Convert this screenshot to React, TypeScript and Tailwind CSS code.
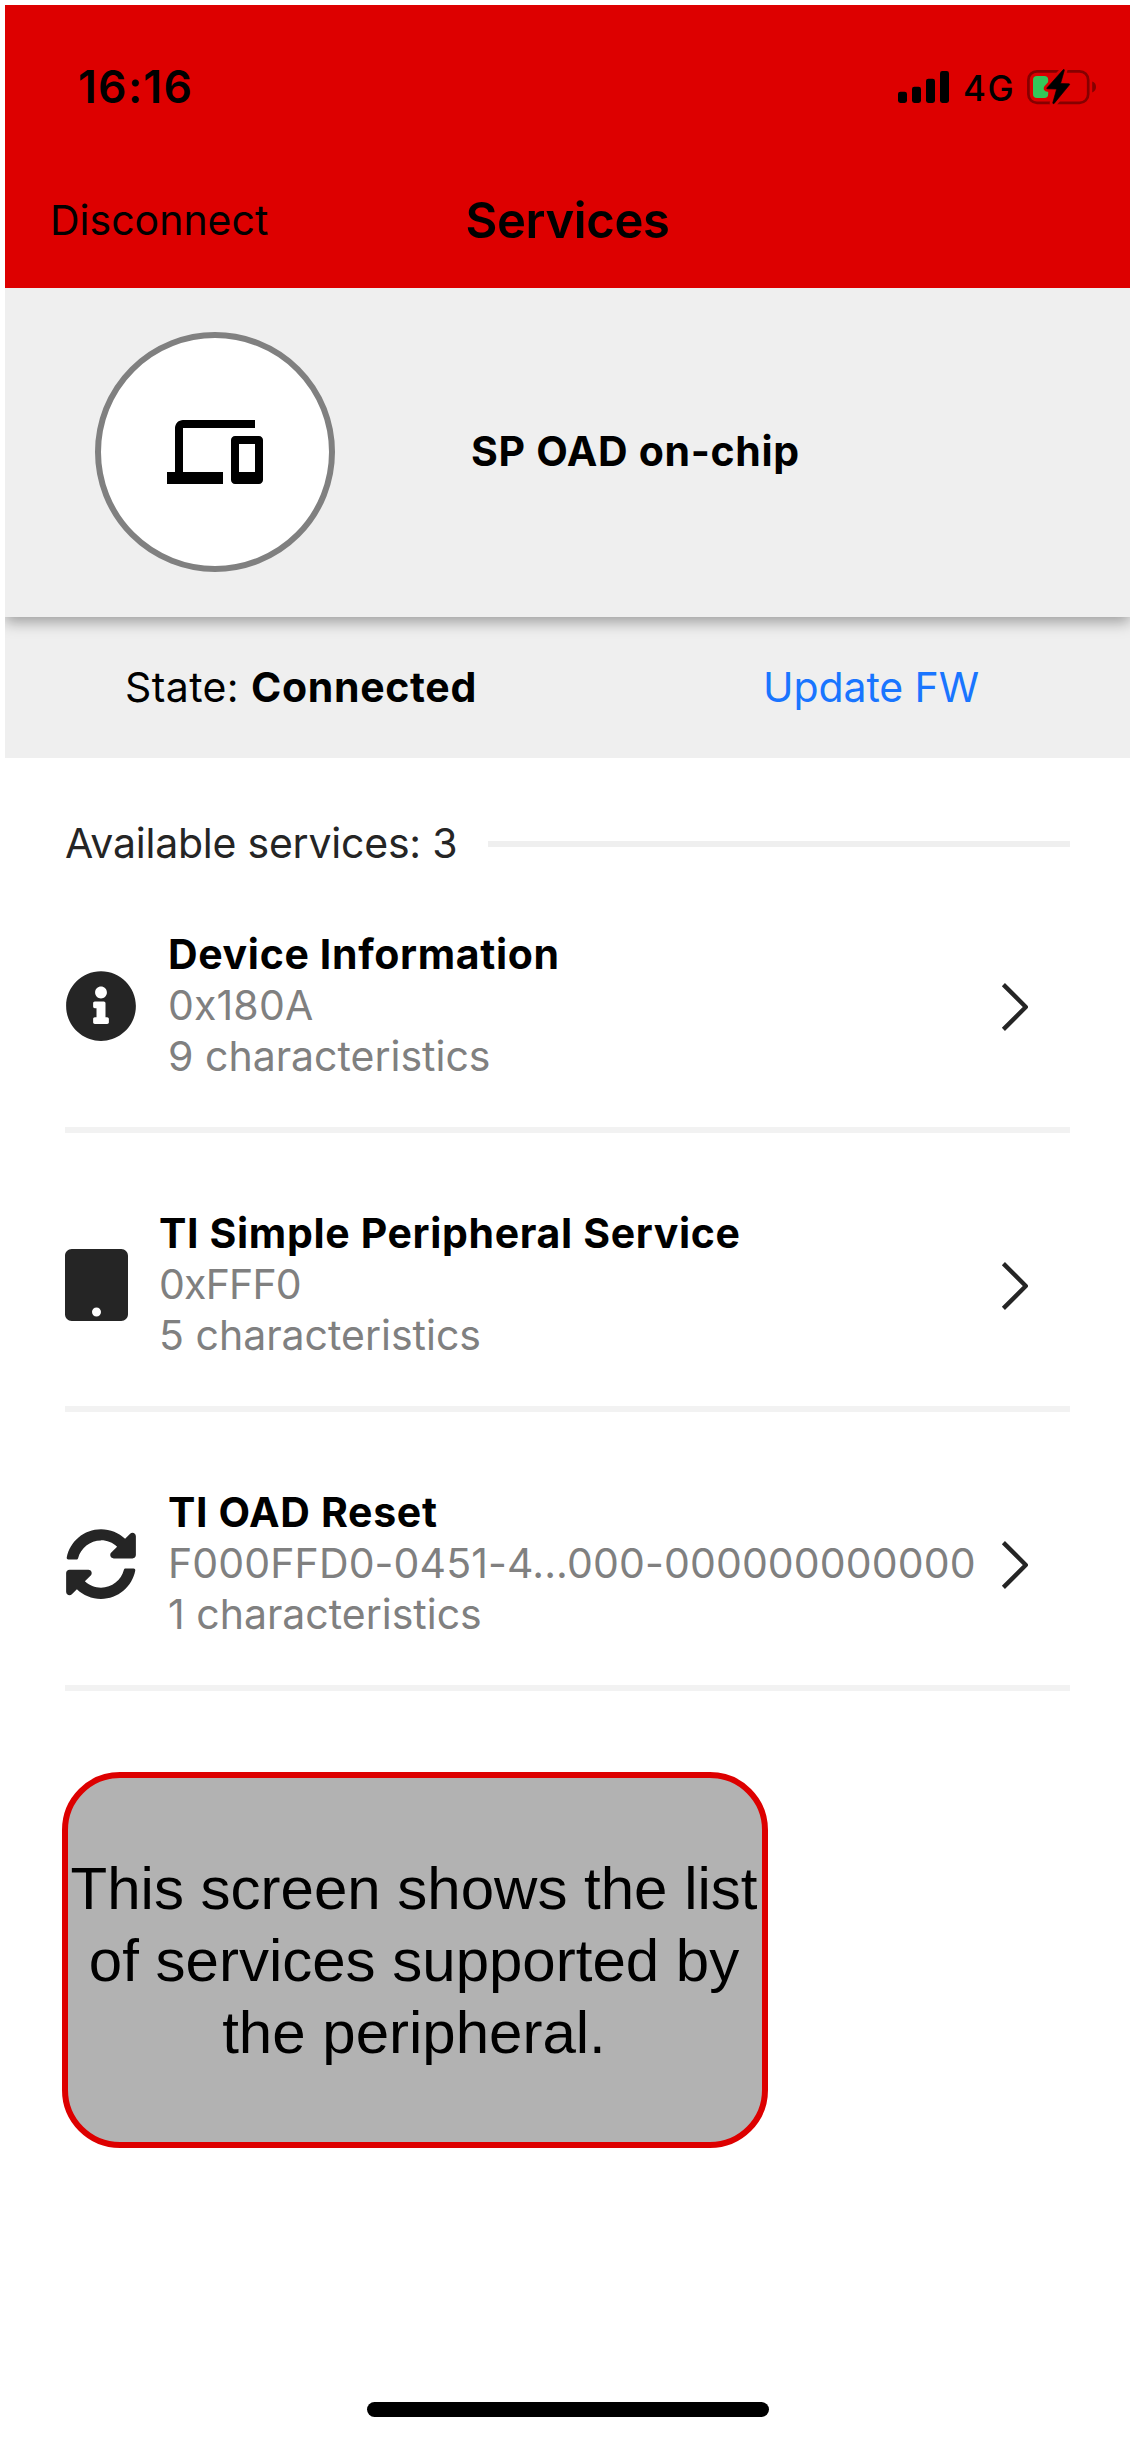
import React from "react";
import { FaInfoCircle, FaSyncAlt, FaTablet } from "react-icons/fa";
import { MdDevices } from "react-icons/md";

type Service = {
  name: string;
  uuid: string;
  uuidClass: string;
  count: number;
  icon: React.ReactNode;
};

const services: Service[] = [
  {
    name: "Device Information",
    uuid: "0x180A",
    uuidClass: "tracking-[0.15px]",
    count: 9,
    icon: <FaInfoCircle className="h-[72px] w-[72px]" />,
  },
  {
    name: "TI Simple Peripheral Service",
    uuid: "0xFFF0",
    uuidClass: "tracking-[-0.8px]",
    count: 5,
    icon: <FaTablet className="h-[72px] w-[63px]" />,
  },
  {
    name: "TI OAD Reset",
    uuid: "F000FFD0-0451-4...000-000000000000",
    uuidClass: "tracking-[0.12px]",
    count: 1,
    icon: <FaSyncAlt className="h-[72px] w-[72px]" />,
  },
];

function SignalBars() {
  return (
    <svg width="51" height="32" viewBox="0 0 51 32">
      <rect x="0" y="20.7" width="9" height="11.3" rx="2.4" />
      <rect x="14" y="15.7" width="9" height="16.3" rx="2.4" />
      <rect x="28" y="7.7" width="9" height="24.3" rx="2.4" />
      <rect x="42" y="0" width="9" height="32" rx="2.4" />
    </svg>
  );
}

function Battery() {
  const bolt = "M36.3 0.6 L19.9 18.9 Q19.4 19.8 20.4 19.8 L29.6 20.1 L25.7 34 Q26.2 35.4 27.2 34.4 L42.5 15.8 Q43 14.8 42 14.7 L33.6 14.5 L37.4 1.2 Q37.3 0 36.3 0.6 Z";
  return (
    <svg width="70" height="36" viewBox="0 0 70 36">
      <rect x="1.4" y="2.3" width="59.8" height="31.6" rx="8.6" fill="none" stroke="#850000" strokeWidth="2.7" />
      <path d="M65.2 12.6 Q69 14 69 18 Q69 22 65.2 23.4 Z" fill="#850000" />
      <rect x="6" y="7" width="15.2" height="22" rx="4" fill="#34c759" />
      <path d={bolt} fill="#dd0000" stroke="#dd0000" strokeWidth="6" strokeLinejoin="round" />
      <path d={bolt} fill="#000" stroke="#000" strokeWidth="0.6" strokeLinejoin="round" />
    </svg>
  );
}

function Chevron() {
  return (
    <svg width="30" height="50" viewBox="0 0 30 50" className="mt-[2px] shrink-0">
      <path d="M3.4 2.6 L25.8 25 L3.4 47.4" fill="none" stroke="#252525" strokeWidth="4.4" strokeLinejoin="round" />
    </svg>
  );
}

function ServiceRow({ service }: { service: Service }) {
  return (
    <li className="flex flex-col gap-[45px]">
      <div className="flex h-[153px] items-center justify-between pr-10">
        <div className="flex items-center gap-[31px] text-[#252525]">
          {service.icon}
          <div className="whitespace-nowrap leading-[51px] text-[#808080]">
            <div className="font-bold tracking-[0.66px] text-black">{service.name}</div>
            <div className={service.uuidClass}>{service.uuid}</div>
            <div>{service.count} characteristics</div>
          </div>
        </div>
        <Chevron />
      </div>
      <div className="h-[6px] bg-[#f2f2f2]" />
    </li>
  );
}

export default function App() {
  return (
    <div className="flex h-[2448px] w-[1136px] flex-col bg-white pt-[5px] pr-[6px] pb-[31px] pl-[5px] font-['Inter',sans-serif] text-[41px] text-black">
      <header className="flex h-[283px] flex-col bg-[#dd0000]">
        <div className="flex h-[149px] items-start justify-between pt-14 pr-[33px] pl-[73px]">
          <div className="text-[44.5px] leading-[52px] font-semibold tracking-[1.3px]">16:16</div>
          <div className="flex h-[52px] items-center">
            <SignalBars />
            <span className="mt-[2px] ml-[14px] w-[50px] text-[35px] leading-[52px] font-[450] tracking-[1.6px]">4G</span>
            <span className="ml-[14px]">
              <Battery />
            </span>
          </div>
        </div>
        <div className="grid h-[134px] grid-cols-3 items-center">
          <button className="justify-self-start pb-[2px] pl-[45px] text-left leading-[50px]">Disconnect</button>
          <h1 className="text-center text-[49px] leading-[60px] font-semibold tracking-[-0.38px]">Services</h1>
        </div>
      </header>

      <section className="relative flex h-[329px] items-center bg-[#efefef] pb-[1px] pl-[90px] shadow-[0_5px_14px_rgba(0,0,0,0.35)] [clip-path:inset(0_0_-40px_0)]">
        <div className="flex size-60 items-center justify-center rounded-full border-[6px] border-[#808080] bg-white">
          <MdDevices className="size-24" />
        </div>
        <h2 className="ml-[136px] pb-[2px] leading-[50px] font-bold tracking-[0.68px]">SP OAD on-chip</h2>
      </section>

      <section className="flex h-[141px] items-center justify-between bg-[#efefef] pr-[151px] pb-[1px] pl-[120px] leading-[50px]">
        <div>
          <span className="tracking-[0.4px]">State: </span>
          <span className="font-bold tracking-[0.66px]">Connected</span>
        </div>
        <button className="tracking-[-0.1px] text-[#1975ff]">Update FW</button>
      </section>

      <main className="flex flex-col pr-[60px] pl-[60px]">
        <div className="flex h-[171px] items-center">
          <span className="w-[423px] shrink-0 pb-[2px] leading-[50px] tracking-[-0.22px] text-[#252525]">Available services: 3</span>
          <div className="mt-[1px] h-[6px] flex-1 bg-[#efefef]" />
        </div>
        <ul className="flex flex-col gap-[75px]">
          {services.map((s) => (
            <ServiceRow key={s.name} service={s} />
          ))}
        </ul>
      </main>

      <aside className="mt-[81px] ml-[57px] flex h-[376px] w-[706px] items-center justify-center rounded-[58px] border-[6px] border-[#dd0000] bg-[#b2b2b2] pt-[2px] pr-[2px] text-center font-['Liberation_Sans',sans-serif] text-[60px] leading-[72px] whitespace-nowrap">
        <p>
          This screen shows the list
          <br />
          of services supported by
          <br />
          the peripheral.
        </p>
      </aside>

      <div className="mt-auto h-[15px] w-[402px] self-center rounded-full bg-black" />
    </div>
  );
}
